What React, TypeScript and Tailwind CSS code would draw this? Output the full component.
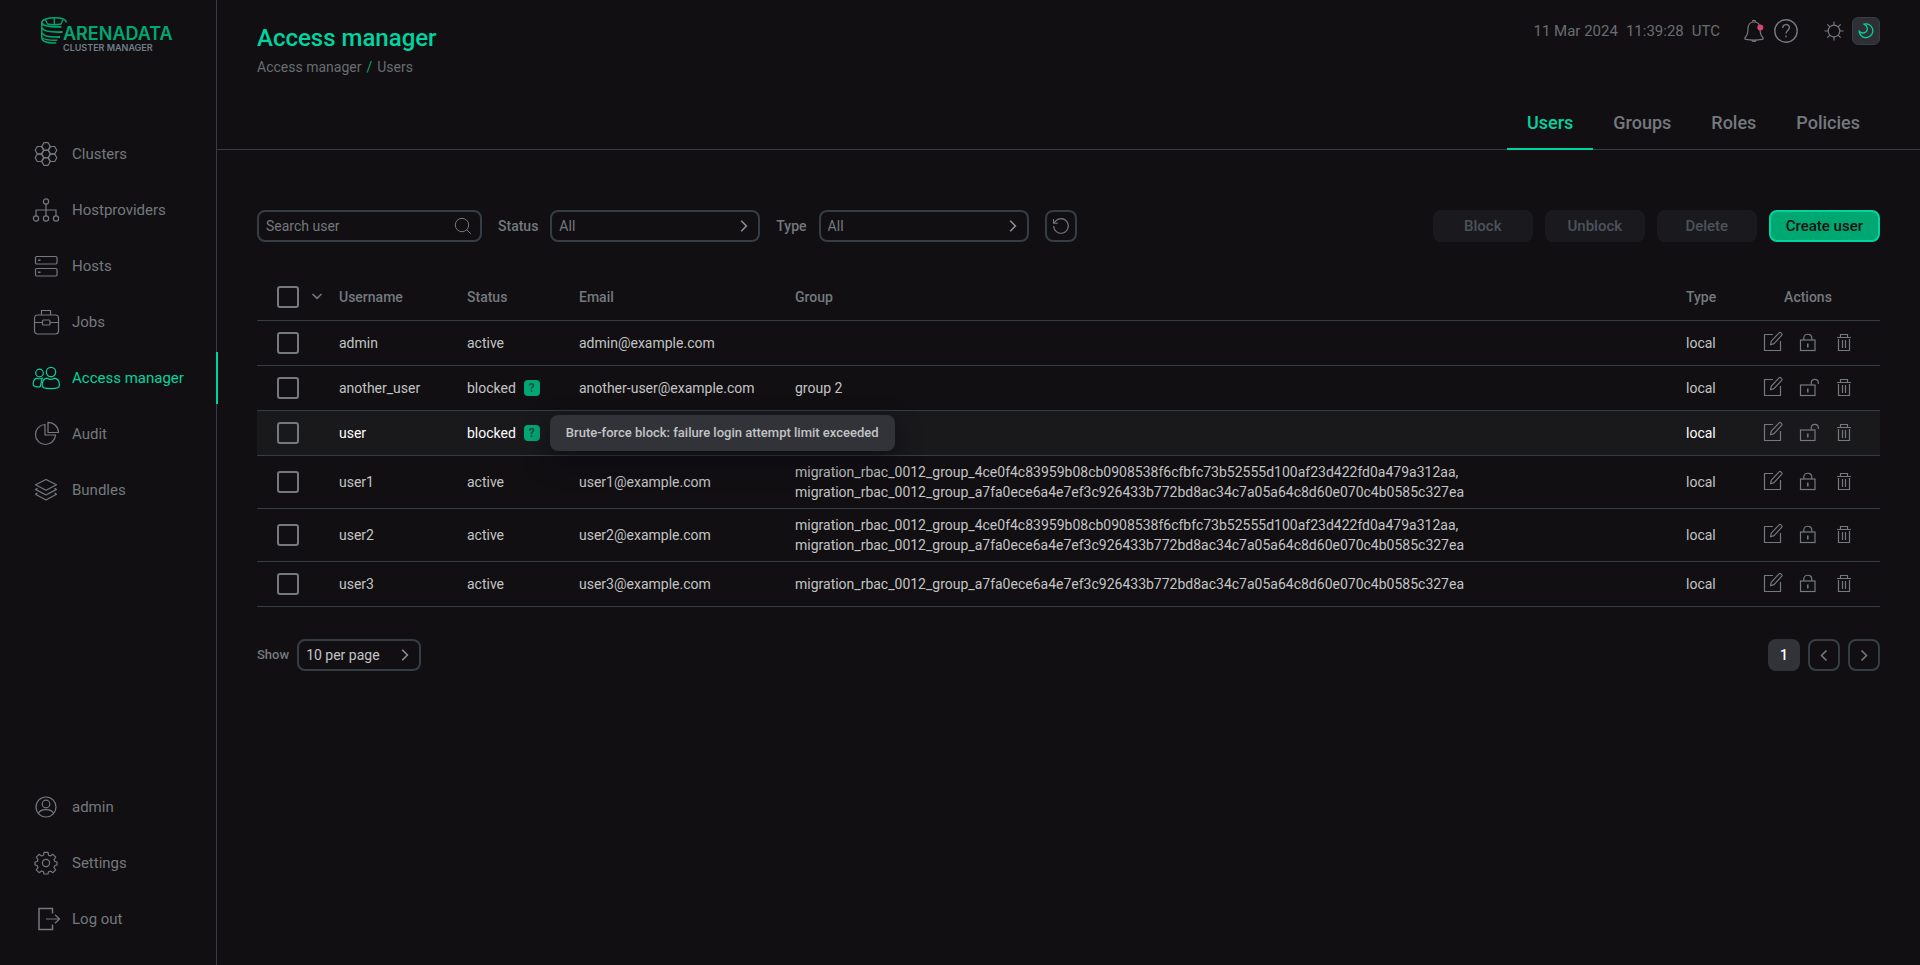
import type { ReactNode, SVGProps } from 'react'
import clsx from 'clsx'

type IconProps = SVGProps<SVGSVGElement>

function Icon({ children, ...props }: IconProps) {
  return (
    <svg fill="none" stroke="currentColor" strokeWidth="1.2" overflow="visible" aria-hidden="true" {...props}>
      {children}
    </svg>
  )
}

const hexCenters = [
  [14, 14],
  [14, 6.4],
  [14, 21.6],
  [7.4, 10.2],
  [7.4, 17.8],
  [20.6, 10.2],
  [20.6, 17.8],
]

const navIcons: Record<string, ReactNode> = {
  clusters: hexCenters.map(([x, y]) => (
    <path key={`${x}-${y}`} d={`M${x - 4.2} ${y}l2.1-3.7h4.2l2.1 3.7-2.1 3.7h-4.2z`} strokeLinejoin="round" />
  )),
  hostproviders: (
    <>
      <circle cx="14" cy="5.5" r="2.6" />
      <circle cx="4" cy="22.5" r="2.6" />
      <circle cx="14" cy="22.5" r="2.6" />
      <circle cx="24" cy="22.5" r="2.6" />
      <path d="M14 8v12M4 20v-6h20v6" />
    </>
  ),
  hosts: (
    <>
      <rect x="3.5" y="4.5" width="21.5" height="7.5" rx="1.2" />
      <rect x="3.5" y="16.5" width="21.5" height="7.5" rx="1.2" />
      <path d="M6 8.2h2.5M6 20.2h2.5" strokeWidth="1.6" />
    </>
  ),
  jobs: (
    <>
      <rect x="2.5" y="7" width="24" height="19" rx="3" />
      <path d="M9.5 7V2.5h9V7M2.5 14.5h8M18 14.5h8.5" />
      <rect x="10.5" y="12" width="7.5" height="5" rx="1" />
    </>
  ),
  access: (
    <>
      <circle cx="19" cy="8" r="4.7" />
      <circle cx="7.5" cy="9" r="3.8" />
      <path d="M15 14.2c-3.3.5-4.8 3-4.8 7 0 2.4 1.5 3.4 8.6 3.4s8.6-1 8.6-3.4c0-4-1.5-6.5-4.8-7-2.4 1.4-5.2 1.4-7.6 0z" />
      <path d="M4.8 14.2C2.4 14.8 1.2 17.2 1.2 20.5c0 1.4.8 2 3.8 2.3h3M4.8 14.2c2 .8 3.5.8 5.4 0l-2 8.6" />
    </>
  ),
  audit: (
    <>
      <path d="M13 4.5a10 10 0 1 0 10.5 10.5H13z" />
      <path d="M16 2.3v10.2h10.5A10.3 10.3 0 0 0 16 2.3z" />
    </>
  ),
  bundles: (
    <g strokeLinejoin="round">
      <path d="M14 3.5l10.5 5.3L14 14.2 3.5 8.8z" />
      <path d="M5.5 12.2l-2 1.2L14 19l10.5-5.6-2-1.2M5.5 17l-2 1.2L14 24l10.5-5.8-2-1.2" />
    </g>
  ),
  profile: (
    <>
      <circle cx="14" cy="14" r="10" />
      <circle cx="14" cy="11" r="3.8" />
      <path d="M6.5 20.5c1.5-5.3 13.5-5.3 15 0" />
    </>
  ),
  settings: (
    <>
      <circle cx="14" cy="14" r="3.6" />
      <path
        strokeLinejoin="round"
        d="M12 3.3h4l.5 2.9 2 .8 2.4-1.7 2.8 2.8-1.7 2.4.8 2 2.2.5v3l-2.2.5-.8 2 1.7 2.4-2.8 2.8-2.4-1.7-2 .8-.5 2.2h-4l-.5-2.2-2-.8-2.4 1.7-2.8-2.8L6 18.5l-.8-2-2.2-.5v-3l2.2-.5.8-2-1.7-2.4 2.8-2.8L9.5 7l2-.8z"
      />
    </>
  ),
  logout: (
    <>
      <path d="M20.5 8.5v-5H7v21h13.5v-5" strokeWidth="1.5" />
      <path d="M14 14h13.5M23 9.8l4.5 4.2-4.5 4.2" />
    </>
  ),
}

const mainNav = [
  { icon: 'clusters', label: 'Clusters' },
  { icon: 'hostproviders', label: 'Hostproviders' },
  { icon: 'hosts', label: 'Hosts' },
  { icon: 'jobs', label: 'Jobs' },
  { icon: 'access', label: 'Access manager', active: true },
  { icon: 'audit', label: 'Audit' },
  { icon: 'bundles', label: 'Bundles' },
]

const userNav = [
  { icon: 'profile', label: 'admin' },
  { icon: 'settings', label: 'Settings' },
  { icon: 'logout', label: 'Log out' },
]

const tabs = ['Users', 'Groups', 'Roles', 'Policies']

const groupA = 'migration_rbac_0012_group_4ce0f4c83959b08cb0908538f6cfbfc73b52555d100af23d422fd0a479a312aa'
const groupB = 'migration_rbac_0012_group_a7fa0ece6a4e7ef3c926433b772bd8ac34c7a05a64c8d60e070c4b0585c327ea'

const users = [
  { name: 'admin', status: 'active', email: 'admin@example.com', groups: [] },
  { name: 'another_user', status: 'blocked', email: 'another-user@example.com', groups: ['group 2'] },
  { name: 'user', status: 'blocked', email: '', groups: [], hovered: true },
  { name: 'user1', status: 'active', email: 'user1@example.com', groups: [groupA, groupB] },
  { name: 'user2', status: 'active', email: 'user2@example.com', groups: [groupA, groupB] },
  { name: 'user3', status: 'active', email: 'user3@example.com', groups: [groupB] },
]

function Logo() {
  return (
    <svg width="136" height="38" viewBox="0 0 136 38" role="img" aria-label="Arenadata Cluster Manager">
      <g fill="none" stroke="#00a871" strokeWidth="1.5">
        <path d="M26.5 6.5C26 3.5 21 1.8 14.5 1.8 7 1.8 1.8 4 1.8 6.5v15c0 4.5 6.5 6 14.5 5.2" />
        <path d="M2 7c1 3.2 7 4.2 19.5 3.8M2 12c1.5 3.3 8 4.4 20.5 4M2 17c1.5 3.3 8 4.4 18 4" strokeWidth="1.8" />
        <path d="M2.5 22c2.5 2.2 8 2.4 15 2.2" strokeWidth="1.3" />
        <path d="M5.5 3.8l2 4.2c4.5 1 9 1 13.5 0l2-4.2M14.3 2v6.5" strokeWidth="1.3" />
      </g>
      <text x="23" y="24" className="fill-[#00a871] font-[Inter] text-[18px] font-semibold">
        ARENADATA
      </text>
      <text x="23" y="35" className="fill-[#6f7e89] font-[Inter] text-[9px] font-semibold">
        CLUSTER MANAGER
      </text>
    </svg>
  )
}

function NavLink({ icon, label, active }: { icon: string; label: string; active?: boolean }) {
  return (
    <li>
      <a
        href="#"
        className={clsx(
          'flex h-13 items-center gap-3 border-r-2 pl-8 text-[15px]',
          active ? 'border-[#00d4a0] text-[#00d4a0]' : 'border-transparent text-[#74797e]',
        )}
      >
        <Icon className="size-7" viewBox="0 0 28 28">
          {navIcons[icon]}
        </Icon>
        {label}
      </a>
    </li>
  )
}

function Sidebar() {
  return (
    <aside className="flex w-[217px] shrink-0 flex-col border-r border-[#353d45] pt-4 pb-5">
      <a href="#" className="ml-10">
        <Logo />
      </a>
      <nav className="mt-[74px] -mr-[2px] flex grow flex-col justify-between">
        <ul className="flex flex-col gap-1">
          {mainNav.map((item) => (
            <NavLink key={item.label} {...item} />
          ))}
        </ul>
        <ul className="flex flex-col gap-1">
          {userNav.map((item) => (
            <NavLink key={item.label} {...item} />
          ))}
        </ul>
      </nav>
    </aside>
  )
}

function Header() {
  return (
    <header className="border-b border-[#353d45] px-10 pt-[17px]">
      <div className="flex items-start justify-between">
        <div className="pt-[7px]">
          <h1 className="text-2xl/7 font-medium text-[#00d4a0]">Access manager</h1>
          <div className="mt-[5px] flex gap-[5px] text-sm/5 text-[#696d71]">
            <a href="#">Access manager</a>
            <span className="text-[#00a871]">/</span>
            <span>Users</span>
          </div>
        </div>

        <div className="flex h-7 items-center text-[#74797e]">
          <div className="mr-[22px] flex gap-2 text-[15px] text-[#696d71]">
            <span>11 Mar 2024</span>
            <span>11:39:28</span>
            <span>UTC</span>
          </div>
          <button type="button" aria-label="Notifications" className="mr-2">
            <Icon className="size-6" viewBox="0 0 24 24">
              <path d="M12 3c-4 0-6 2.6-6 6.5 0 4.5-.8 7-2.8 9-.7.8-.3 1.8.6 1.8 5 .9 11.4.9 16.4 0 .9 0 1.3-1 .6-1.8-2-2-2.8-4.5-2.8-9C18 5.6 16 3 12 3z" />
              <path d="M10.3 2.8c0-2 3.4-2 3.4 0M9.8 21c.6 2 3.8 2 4.4 0" />
              <circle cx="18.3" cy="8.5" r="3" fill="#d6456d" stroke="none" />
            </Icon>
          </button>
          <button type="button" aria-label="Help" className="mr-[26px]">
            <Icon className="size-6" viewBox="0 0 24 24">
              <circle cx="12" cy="12" r="11.2" strokeWidth="1.4" />
              <path d="M8.8 9c0-4.6 6.6-4.4 6.6-.4 0 2.8-3.4 2.9-3.4 6M12 16.6v1.7" strokeWidth="1.4" />
            </Icon>
          </button>
          <button type="button" aria-label="Light theme" className="mr-2">
            <Icon className="size-5" viewBox="0 0 20 20">
              <circle cx="10" cy="10" r="5.8" />
              <path d="M10 .5V4M10 16v3.5M.5 10H4M16 10h3.5M3.3 3.3l2.6 2.6M14.1 14.1l2.6 2.6M3.3 16.7l2.6-2.6M14.1 5.9l2.6-2.6" />
            </Icon>
          </button>
          <button
            type="button"
            aria-label="Dark theme"
            className="flex size-7 items-center justify-center rounded-md border border-[#353d45] bg-[#2e3035] text-[#00d4a0]"
          >
            <Icon className="size-4" viewBox="0 0 16 16" strokeWidth="1.3" strokeLinejoin="round">
              <path d="M5.8 1.2A6.9 6.9 0 1 1 1.1 7.8c1.2 2.4 4.8 3 7 1C10.4 6.6 9.5 2.5 5.8 1.2z" />
            </Icon>
          </button>
        </div>
      </div>

      <nav className="mt-[27px] -mb-px flex justify-end">
        {tabs.map((tab) => (
          <a
            key={tab}
            href="#"
            className={clsx(
              'border-b-2 px-5 pt-[7px] pb-[13px] text-lg/6 font-medium',
              tab === 'Users' ? 'border-[#00d4a0] text-[#00d4a0]' : 'border-transparent text-[#74797e]',
            )}
          >
            {tab}
          </a>
        ))}
      </nav>
    </header>
  )
}

function Select({ id, value, className }: { id: string; value: string; className: string }) {
  return (
    <div className={clsx('relative', className)}>
      <select
        id={id}
        className="h-8 w-full appearance-none rounded-lg border-2 border-[#353d45] bg-transparent pr-7 pl-[7px] text-sm"
      >
        <option>{value}</option>
      </select>
      <Icon
        className="pointer-events-none absolute top-2 right-2 size-4 text-[#8a8f94]"
        viewBox="0 0 16 16"
        strokeWidth="1.6"
      >
        <path d="M5.2 2.8L10.4 8l-5.2 5.2" />
      </Icon>
    </div>
  )
}

function Toolbar() {
  return (
    <div className="flex items-center justify-between">
      <div className="flex items-center gap-4 text-sm font-medium text-[#74797e]">
        <div className="relative w-[225px]">
          <input
            type="text"
            aria-label="Search user"
            placeholder="Search user"
            className="h-8 w-full rounded-lg border-2 border-[#353d45] bg-transparent pr-8 pl-[7px] text-sm font-normal placeholder:text-[#74797e]"
          />
          <Icon className="absolute top-[7px] right-2.5 size-[18px]" viewBox="0 0 18 18" strokeWidth="1">
            <circle cx="8" cy="8" r="6.7" />
            <path d="M12.8 12.8l4 4" />
          </Icon>
        </div>
        <div className="flex items-center gap-3">
          <label htmlFor="status">Status</label>
          <Select id="status" value="All" className="w-[210px] font-normal" />
        </div>
        <div className="flex items-center gap-3">
          <label htmlFor="type">Type</label>
          <Select id="type" value="All" className="w-[210px] font-normal" />
        </div>
        <button
          type="button"
          aria-label="Reset filters"
          className="flex size-8 items-center justify-center rounded-lg border-2 border-[#353d45]"
        >
          <Icon className="size-[18px]" viewBox="0 0 18 18" strokeWidth="1.1">
            <path d="M1.7 9a7.3 7.3 0 1 0 1.6-4.6M1.5 2v4.3h4.3M1.7 6L4 3.8" />
          </Icon>
        </button>
      </div>

      <div className="flex gap-3 text-[15px] font-medium">
        {['Block', 'Unblock', 'Delete'].map((action) => (
          <button key={action} type="button" disabled className="h-8 w-[100px] rounded-lg bg-[#1a1a1e] text-[#4b535b]">
            {action}
          </button>
        ))}
        <button type="button" className="h-8 rounded-lg border-2 border-[#00d4a0] bg-[#00a871] px-[15px] text-[#110f12]">
          Create user
        </button>
      </div>
    </div>
  )
}

function Checkbox({ label }: { label: string }) {
  return (
    <input
      type="checkbox"
      aria-label={label}
      className="block size-[22px] appearance-none rounded-[3px] border-2 border-[#74797e] checked:bg-[#00a871]"
    />
  )
}

function RowActions({ name, blocked }: { name: string; blocked: boolean }) {
  return (
    <div className="flex justify-center gap-4 text-[#74797e]">
      <button type="button" aria-label={`Edit ${name}`}>
        <Icon className="size-5" viewBox="-2 2 20 20" strokeLinejoin="round">
          <path d="M9 3.5H.5v16h16V10" />
          <path d="M6.5 13.8l.8-3.7 7.8-8.3c1-1 3.7 1 2.7 2.4l-7.8 8.4z" />
        </Icon>
      </button>
      <button type="button" aria-label={`${blocked ? 'Unblock' : 'Block'} ${name}`}>
        <Icon className="size-5" viewBox="-1 2 20 20">
          <rect x="1.5" y="9" width="14.5" height="10.5" />
          {blocked ? (
            <path d="M12.3 9V6.5c0-4.3 7-4.3 7 0V8" />
          ) : (
            <path d="M4.8 9V7c0-5 8-5 8 0v2" />
          )}
          <path d="M8.8 12.5v4" strokeWidth="1.6" />
        </Icon>
      </button>
      <button type="button" aria-label={`Delete ${name}`}>
        <Icon className="size-5" viewBox="0 2 20 20">
          <path d="M3 6.5h14M4.5 8v11.5h11V8M6.5 6V3.5h7V6M8.5 9v8M11.5 9v8" />
        </Icon>
      </button>
    </div>
  )
}

function UsersTable() {
  return (
    <table className="mt-8 w-full table-fixed text-left text-sm/5 text-[#c3c4c5]">
      <colgroup>
        <col className="w-[70px]" />
        <col className="w-[128px]" />
        <col className="w-[112px]" />
        <col className="w-[216px]" />
        <col />
        <col className="w-[62px]" />
        <col className="w-[144px]" />
      </colgroup>
      <thead className="text-[#74797e]">
        <tr className="h-[46px] border-b border-[#353d45]">
          <th className="pl-5">
            <div className="flex items-center gap-2.5">
              <Checkbox label="Select all users" />
              <button type="button" aria-label="Selection options">
                <Icon className="size-4" viewBox="0 0 16 16" strokeWidth="1.6">
                  <path d="M3.5 5L8 9.3 12.5 5" />
                </Icon>
              </button>
            </div>
          </th>
          <th className="px-3 font-medium">Username</th>
          <th className="px-3 font-medium">Status</th>
          <th className="px-3 font-medium">Email</th>
          <th className="px-3 font-medium">Group</th>
          <th className="px-3 font-medium">Type</th>
          <th className="px-3 text-center font-medium">Actions</th>
        </tr>
      </thead>
      <tbody>
        {users.map((user) => (
          <tr
            key={user.name}
            className={clsx('h-[45px] border-b border-[#353d45]', user.hovered && 'bg-[#19181b] text-white')}
          >
            <td className="pl-5">
              <Checkbox label={`Select ${user.name}`} />
            </td>
            <td className="px-3">{user.name}</td>
            <td className="px-3">
              <div className="flex items-center gap-2">
                {user.status}
                {user.status === 'blocked' && (
                  <span className="relative">
                    <button
                      type="button"
                      aria-label="Block reason"
                      className="flex size-4 items-center justify-center rounded-sm bg-[#00a871] text-xs/4 font-bold text-[#2b4a4a]"
                    >
                      ?
                    </button>
                    {user.hovered && (
                      <span
                        role="tooltip"
                        className="absolute top-1/2 left-full z-10 ml-2.5 -translate-y-1/2 rounded-lg bg-[#323338] px-4 py-2 text-[13px]/5 font-medium whitespace-nowrap text-[#c3c4c5] shadow-[0_10px_24px_rgba(10,10,20,0.6)]"
                      >
                        Brute-force block: failure login attempt limit exceeded
                      </span>
                    )}
                  </span>
                )}
              </div>
            </td>
            <td className="px-3">{user.email}</td>
            <td className="px-3 py-1.5">
              {user.groups.map((group, i) => (
                <div key={group}>
                  {group}
                  {i < user.groups.length - 1 && ','}
                </div>
              ))}
            </td>
            <td className="px-3">local</td>
            <td>
              <RowActions name={user.name} blocked={user.status === 'blocked'} />
            </td>
          </tr>
        ))}
      </tbody>
    </table>
  )
}

function Pagination() {
  return (
    <div className="mt-8 flex items-center justify-between">
      <div className="flex items-center gap-2">
        <label htmlFor="per-page" className="text-[13px] font-medium text-[#74797e]">
          Show
        </label>
        <Select id="per-page" value="10 per page" className="w-[124px] text-[#c3c4c5]" />
      </div>
      <div className="flex gap-2 text-[#74797e]">
        <button type="button" className="size-8 rounded-lg bg-[#323338] text-sm font-medium text-white">
          1
        </button>
        <button
          type="button"
          aria-label="Previous page"
          className="flex size-8 items-center justify-center rounded-lg border-2 border-[#353d45]"
        >
          <Icon className="size-4" viewBox="0 0 16 16" strokeWidth="1.6">
            <path d="M10.5 3.5l-5 5 5 5" />
          </Icon>
        </button>
        <button
          type="button"
          aria-label="Next page"
          className="flex size-8 items-center justify-center rounded-lg border-2 border-[#353d45]"
        >
          <Icon className="size-4" viewBox="0 0 16 16" strokeWidth="1.6">
            <path d="M5.5 3.5l5 5-5 5" />
          </Icon>
        </button>
      </div>
    </div>
  )
}

export default function App() {
  return (
    <div className="flex min-h-screen bg-[#110f12] font-[Roboto,sans-serif]">
      <Sidebar />
      <div className="min-w-0 grow">
        <Header />
        <main className="px-10 pt-15">
          <Toolbar />
          <UsersTable />
          <Pagination />
        </main>
      </div>
    </div>
  )
}
